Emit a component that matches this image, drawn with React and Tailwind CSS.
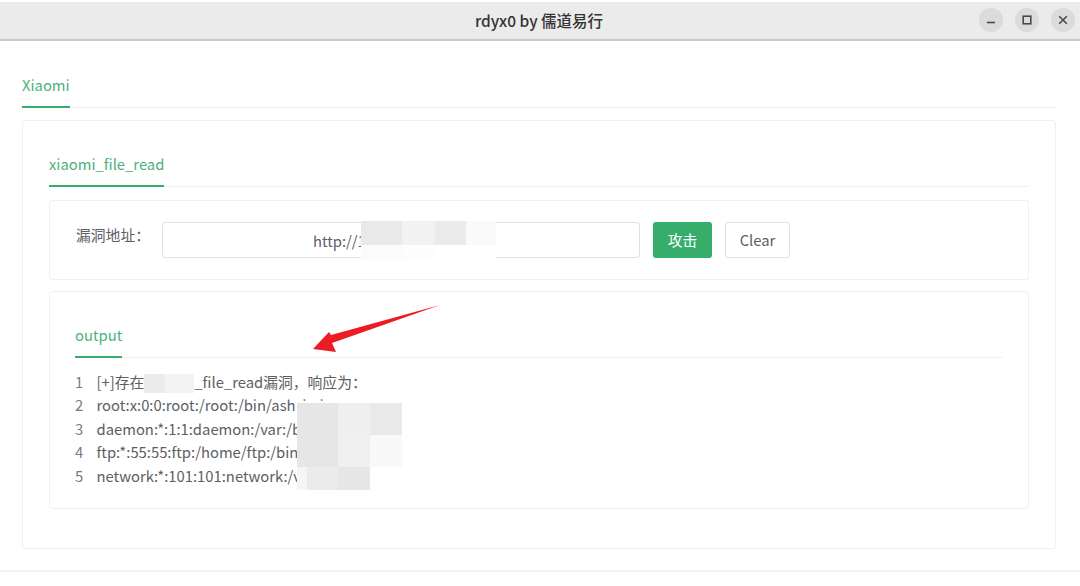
const lines = [
  <>[+]存在<span className="inline-block w-[50px]">xiaomi</span>_file_read漏洞，响应为：</>,
  'root:x:0:0:root:/root:/bin/ash  i    i',
  'daemon:*:1:1:daemon:/var:/bin/false',
  'ftp:*:55:55:ftp:/home/ftp:/bin/false',
  'network:*:101:101:network:/var:/bin/false',
];

function TabBar({ label, className }) {
  return (
    <div className={`flex items-end border-b border-[#eff0f3] ${className}`}>
      <div className="mb-[-1px] border-b-2 border-[#36ad6a] pb-[10px] text-[14.8px] leading-[22px] text-[#4bb27c]">{label}</div>
    </div>
  );
}

function WindowButton({ children }) {
  return (
    <div className="flex h-[24px] w-[24px] items-center justify-center rounded-full bg-[#dbdbdb]">
      <svg width="12" height="12" viewBox="0 0 12 12" fill="none" stroke="#4a4a4a" strokeWidth="1.6">
        {children}
      </svg>
    </div>
  );
}

export default function App() {
  return (
    <div className="h-[586px] w-[1080px] overflow-hidden bg-white pt-[2px] font-['Noto_Sans_CJK_SC','Noto_Sans',sans-serif] text-[#5d5e64]">
      <header className="relative flex h-[39px] items-center justify-center border-b-2 border-[#c9c9c9] bg-[#ebebeb]">
        <span className="mr-[2px] text-[15.5px] font-medium text-[#333333]">rdyx0 by 儒道易行</span>
        <div className="absolute right-[5px] top-[6px] flex gap-[12px]">
          <WindowButton><path d="M2 8.5h8" /></WindowButton>
          <WindowButton><rect x="2.2" y="2.2" width="7.6" height="7.6" /></WindowButton>
          <WindowButton><path d="M2.2 2.2l7.6 7.6M9.8 2.2l-7.6 7.6" /></WindowButton>
        </div>
      </header>

      <main className="px-[22px] pt-[22px]">
        <TabBar label="Xiaomi" className="mr-[2px] h-[45px]" />

        <section className="mr-[2px] mt-[12px] h-[429px] rounded-[3px] border border-[#eff0f3] px-[26px] pt-[31px]">
          <TabBar label="xiaomi_file_read" className="h-[35px]" />

          <div className="mt-[13px] flex h-[80px] items-center rounded-[3px] border border-[#eff0f3] pl-[26px]">
            <span className="mb-[10px] w-[86px] text-[14.8px]">漏洞地址：</span>
            <div className="relative h-[36px] w-[478px]">
              <input
                readOnly
                defaultValue="http://192.168.110.1:8080"
                className="h-full w-full rounded-[3px] border border-[#e0e0e6] bg-white text-center text-[14.8px] text-[#5d5e64] outline-none"
              />
              <div className="absolute left-[199px] top-[-1px] grid h-[39px] w-[135px] grid-cols-[41px_33px_31px_30px] grid-rows-[24px_15px]">
                <div className="bg-[#e9e9e9]" />
                <div className="bg-[#f2f2f2]" />
                <div className="bg-[#ebebeb]" />
                <div className="bg-[#fafafa]" />
                <div className="bg-[#fbfbfb]" />
                <div className="bg-[#fdfdfd]" />
                <div className="bg-white" />
                <div className="bg-white" />
              </div>
            </div>
            <button className="ml-[13px] h-[36px] w-[59px] rounded-[3px] bg-[#36ad6a] text-[14.8px] text-white">攻击</button>
            <button className="ml-[13px] h-[36px] w-[65px] rounded-[3px] border border-[#e0e0e6] bg-white text-[14.8px] text-[#5d5e64]">Clear</button>
          </div>

          <div className="relative mt-[11px] h-[218px] rounded-[3px] border border-[#eff0f3] px-[25px] pt-[31px]">
            <TabBar label="output" className="h-[35px]" />

            <div className="mt-[12px] text-[14.8px] leading-[23.4px]">
              {lines.map((line, i) => (
                <div key={i} className="flex">
                  <span className="w-[21.5px] text-[#7a7b80]">{i + 1}</span>
                  <span className="whitespace-pre">{line}</span>
                </div>
              ))}
            </div>

            {/* mosaics over the redacted text */}
            <div className="absolute left-[94px] top-[82px] flex h-[19px] w-[50px]">
              <div className="w-[21px] bg-[#ebebeb]" />
              <div className="w-[29px] bg-[#f3f3f3]" />
            </div>
            <div className="absolute left-[247px] top-[111px] grid h-[87px] w-[105px] grid-cols-[10px_31px_32px_32px] grid-rows-[32px_32px_23px]">
              <div className="col-span-2 bg-[#e6e6e6]" />
              <div className="bg-[#efefef]" />
              <div className="bg-[#e9e9e9]" />
              <div className="col-span-2 bg-[#e6e6e6]" />
              <div className="bg-[#f0f0f0]" />
              <div className="bg-[#f9f9f9]" />
              <div className="bg-[#f5f5f5]" />
              <div className="bg-[#ebebeb]" />
              <div className="bg-[#e6e6e6]" />
              <div className="bg-white" />
            </div>

            {/* red annotation arrow */}
            <svg className="absolute left-[262px] top-[12px]" width="130" height="50" viewBox="0 0 130 50">
              <path d="M128 1 L20 39 L24 48 L1 45 L17 28 L19 31 Z" fill="#ec1c24" />
            </svg>
          </div>
        </section>

        <div className="mx-[-22px] mt-[21px] border-t-2 border-[#f3f3f5]" />
      </main>
    </div>
  );
}
